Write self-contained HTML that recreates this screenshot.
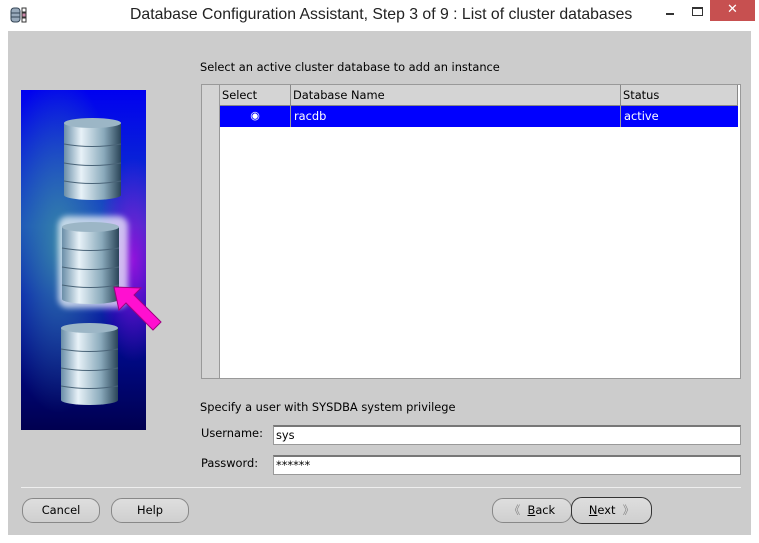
<!DOCTYPE html>
<html><head><meta charset="utf-8"><style>
*{margin:0;padding:0;box-sizing:border-box}
body{width:759px;height:543px;background:#fff;position:relative;overflow:hidden;font-family:"DejaVu Sans","Liberation Sans",sans-serif;font-size:11.4px;color:#000}
.a{position:absolute}
.lbl{position:absolute;font-size:11.4px;white-space:nowrap}
.btn{position:absolute;border:1px solid #888;border-radius:11px;background:linear-gradient(#dedede,#cfcfcf);height:25px;text-align:center;line-height:23px;font-size:11.4px}
.field{position:absolute;background:#fff;border:1px solid #999;border-top:2px solid #777;height:20px;line-height:17px;padding-left:2px;font-size:11.4px}
.th{position:absolute;top:0;height:21px;line-height:20px;padding-left:2px;border-right:1px solid #888;border-bottom:1px solid #888;background:#d4d4d4}
.td{position:absolute;top:21px;height:21px;line-height:20px;padding-left:3px;color:#fff;border-right:1px solid #999}
</style></head><body>
<svg class="a" style="left:10px;top:6px" width="18" height="18"><rect x="1" y="2" width="9" height="14" rx="3" fill="#9ab" stroke="#345"/><line x1="1" y1="7" x2="10" y2="7" stroke="#345"/><line x1="1" y1="11" x2="10" y2="11" stroke="#345"/><rect x="12" y="2" width="4" height="4" fill="#fff" stroke="#333"/><rect x="12" y="7" width="4" height="4" fill="#c8a" stroke="#333"/><rect x="12" y="12" width="4" height="4" fill="#fff" stroke="#333"/></svg>
<div class="a" style="left:130px;top:6px;font-family:'Liberation Sans',sans-serif;font-size:15.8px;color:#222">Database Configuration Assistant, Step 3 of 9 : List of cluster databases</div>
<div class="a" style="left:666px;top:13px;width:8px;height:2px;background:#333"></div>
<div class="a" style="left:692px;top:7px;width:11px;height:9px;border:1px solid #333;border-top-width:2px"></div>
<div class="a" style="left:710px;top:0;width:45px;height:21px;background:#c75050;color:#fff;text-align:center;line-height:20px;font-size:13px">✕</div>

<div class="a" style="left:8px;top:31px;width:743px;height:504px;background:#cccccc"></div>

<svg class="a" style="left:21px;top:90px" width="145" height="340">
<defs>
<linearGradient id="bg" x1="0" y1="0" x2="0" y2="1"><stop offset="0" stop-color="#0000f0"/><stop offset="0.4" stop-color="#1040c0"/><stop offset="0.6" stop-color="#0010b0"/><stop offset="1" stop-color="#000050"/></linearGradient>
<radialGradient id="gl" cx="0.3" cy="0.45" r="0.5"><stop offset="0" stop-color="#3a8aa8" stop-opacity="0.9"/><stop offset="1" stop-color="#3a8aa8" stop-opacity="0"/></radialGradient>
<radialGradient id="pu" cx="0.9" cy="0.5" r="0.3"><stop offset="0" stop-color="#a010e0" stop-opacity="0.9"/><stop offset="1" stop-color="#a010e0" stop-opacity="0"/></radialGradient>
<linearGradient id="cy" x1="0" y1="0" x2="1" y2="0"><stop offset="0" stop-color="#6a8ea8"/><stop offset="0.3" stop-color="#e8f2f8"/><stop offset="0.7" stop-color="#8aaabb"/><stop offset="1" stop-color="#2a4458"/></linearGradient>
<filter id="bl"><feGaussianBlur stdDeviation="3"/></filter>
<g id="c"><rect x="0" y="5" width="57" height="72" fill="url(#cy)"/><ellipse cx="28.5" cy="77" rx="28.5" ry="5" fill="url(#cy)"/><ellipse cx="28.5" cy="5" rx="28.5" ry="5" fill="#9cb6c6"/><path d="M0 26 Q28 31 57 26 M0 45 Q28 50 57 45 M0 63 Q28 68 57 63" stroke="#4a6478" fill="none"/></g>
</defs>
<rect width="125" height="340" fill="url(#bg)"/>
<rect width="125" height="340" fill="url(#gl)"/>
<rect width="125" height="340" fill="url(#pu)"/>
<use href="#c" x="43" y="28"/>
<rect x="37" y="126" width="70" height="92" rx="10" fill="#fff" opacity="0.7" filter="url(#bl)"/>
<use href="#c" x="41" y="132"/>
<use href="#c" x="40" y="233"/>
<path d="M93 197 L120 198 L113 205 L140 232 L132 240 L105 213 L98 220 Z" fill="#ff10d0" stroke="#a00080"/>
</svg>

<div class="lbl" style="left:200px;top:60px">Select an active cluster database to add an instance</div>
<div class="a" style="left:201px;top:84px;width:540px;height:295px;background:#fff;border:1px solid #999">
 <div class="a" style="left:0;top:0;width:18px;height:293px;background:#d4d4d4;border-right:1px solid #999"></div>
 <div class="th" style="left:18px;width:71px">Select</div>
 <div class="th" style="left:89px;width:330px">Database Name</div>
 <div class="th" style="left:419px;width:117px">Status</div>
 <div class="a" style="left:18px;top:21px;width:518px;height:21px;background:#0000ff"></div>
 <div class="td" style="left:18px;width:71px;text-align:center;padding-left:0;font-size:11px">◉</div>
 <div class="td" style="left:89px;width:330px">racdb</div>
 <div class="td" style="left:419px;width:117px;border:none">active</div>
</div>

<div class="lbl" style="left:200px;top:400px">Specify a user with SYSDBA system privilege</div>
<div class="lbl" style="left:201px;top:426px">Username:</div>
<div class="field" style="left:273px;top:425px;width:468px">sys</div>
<div class="lbl" style="left:201px;top:456px">Password:</div>
<div class="field" style="left:273px;top:455px;width:468px">******</div>

<div class="a" style="left:21px;top:487px;width:720px;height:1px;background:#999;border-bottom:1px solid #eee"></div>
<div class="btn" style="left:22px;top:498px;width:78px">Cancel</div>
<div class="btn" style="left:111px;top:498px;width:78px">Help</div>
<div class="btn" style="left:492px;top:498px;width:80px"><span style="color:#888">《</span>&nbsp;&nbsp;<u>B</u>ack</div>
<div class="btn" style="left:571px;top:497px;width:81px;height:27px;border-color:#333;line-height:25px"><u>N</u>ext&nbsp;&nbsp;<span style="color:#888">》</span></div>
</body></html>
